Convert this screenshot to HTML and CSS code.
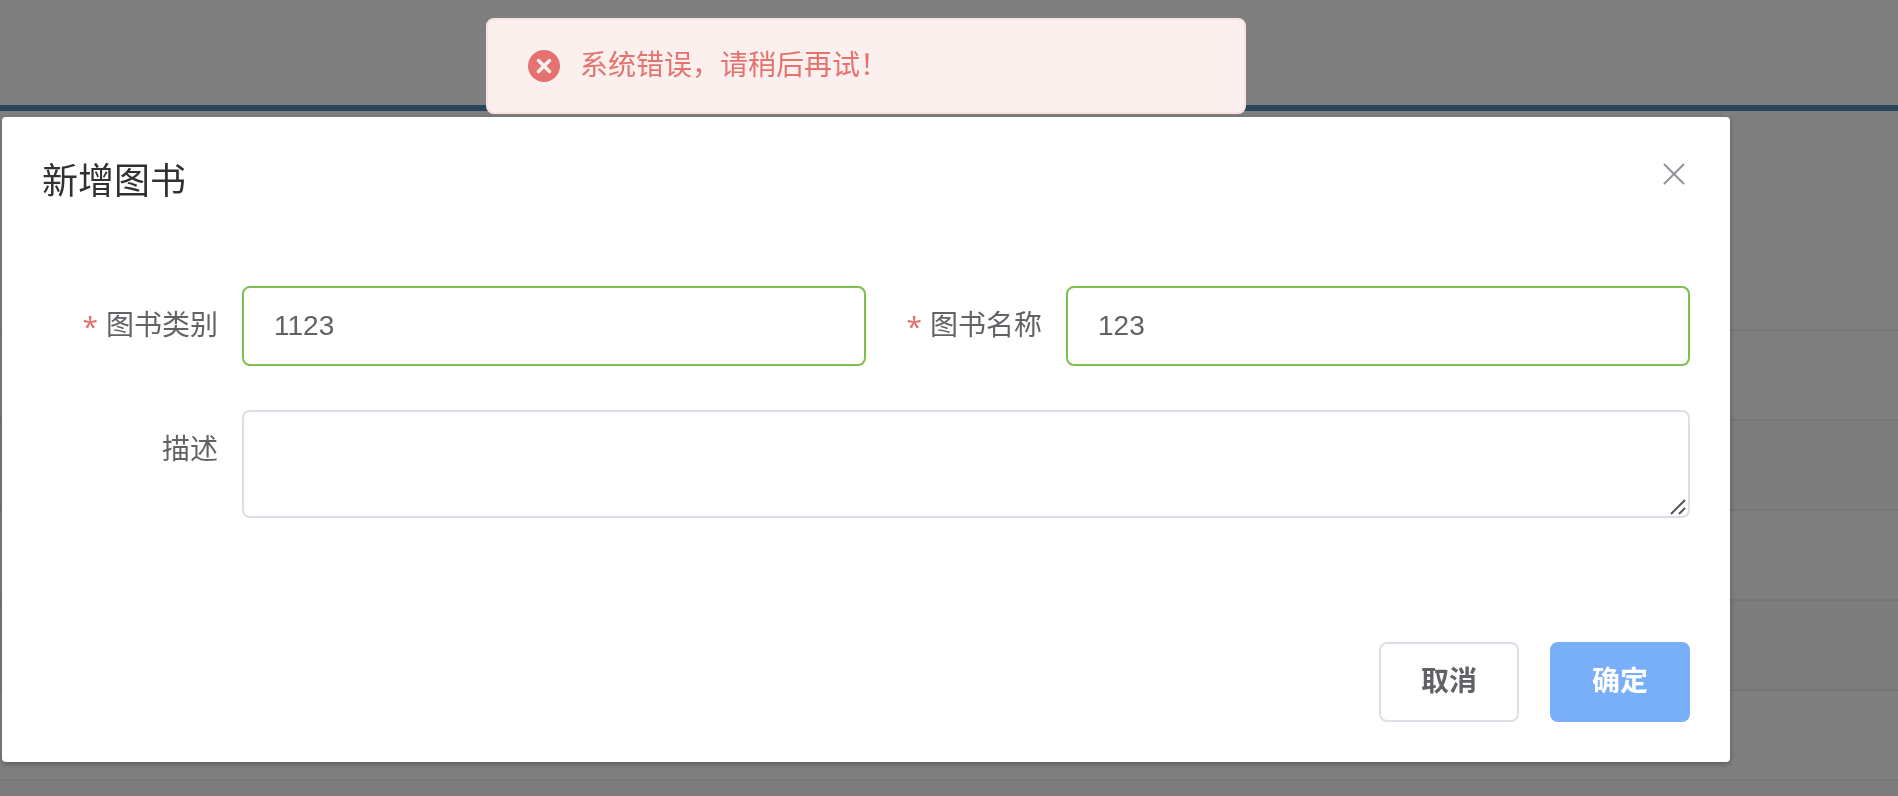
FILE: index.html
```
<!DOCTYPE html>
<html lang="zh-CN">
<head>
  <meta charset="UTF-8">
  <title>新增图书</title>
  <link rel="stylesheet" href="styles.css">
</head>
<body>
  <div class="page">
    <div class="page-header"></div>
    <div class="page-tools"></div>
    <div class="row"></div>
    <div class="row"></div>
    <div class="row"></div>
    <div class="row"></div>
    <div class="row"></div>
    <div class="row"></div>
  </div>

  <div class="mask">
    <div class="dialog" role="dialog" aria-labelledby="dialog-title">
      <div class="dialog-header">
        <h1 class="dialog-title" id="dialog-title">新增图书</h1>
        <button type="button" class="dialog-close" aria-label="关闭">
          <svg viewBox="0 0 32 32" width="32" height="32"><path d="M6 6L26 26M26 6L6 26" fill="none" stroke="currentColor" stroke-width="2"/></svg>
        </button>
      </div>

      <form id="book-form" class="form">
        <div class="form-row">
          <div class="form-item">
            <label class="required" for="category">图书类别</label>
            <input class="success" type="text" id="category" value="1123">
          </div>
          <div class="form-item">
            <label class="required" for="name">图书名称</label>
            <input class="success" type="text" id="name" value="123">
          </div>
        </div>
        <div class="form-item">
          <label for="desc">描述</label>
          <div class="textarea-wrap">
            <textarea id="desc" rows="2"></textarea>
            <svg class="grip" viewBox="0 0 16 16" width="16" height="16"><path d="M1 15L15 1M9 15L15 9" fill="none" stroke="currentColor" stroke-width="2"/></svg>
          </div>
        </div>
      </form>

      <div class="dialog-footer">
        <button type="button" class="btn">取消</button>
        <button type="submit" form="book-form" class="btn btn-primary">确定</button>
      </div>
    </div>

    <div class="message" role="alert">
      <svg class="message-icon" viewBox="0 0 32 32" width="32" height="32"><circle cx="16" cy="16" r="16" fill="currentColor"/><path d="M10.500 10.500L21.500 21.500M21.500 10.500L10.500 21.500" fill="none" stroke="#fcf0ef" stroke-width="3.500" stroke-linecap="round"/></svg>
      <p>系统错误，请稍后再试！</p>
    </div>
  </div>
</body>
</html>
```
FILE: styles.css
```
* {
  box-sizing: border-box;
}
body {
  margin: 0;
  font-family: "Liberation Sans", "Noto Sans CJK SC", sans-serif;
  font-size: 28px;
  color: #606266;
  background: #fff;
}
.page {
  display: flex;
  flex-direction: column;
  height: 100vh;
  overflow: hidden;
}
.page-header {
  flex: none;
  height: 111px;
  border-bottom: 6px solid #548cb8;
}
.page-tools {
  flex: none;
  height: 220px;
  border-bottom: 2px solid #ebeef5;
}
.row {
  flex: none;
  height: 90px;
  border-bottom: 2px solid #ebeef5;
}
.row:nth-child(even) {
  background: #fafafa;
}
.row:last-child {
  flex: 0 1 90px;
  border-bottom: none;
}

/* dialog */
.mask {
  position: fixed;
  inset: 0;
  padding: 117px 168px 34px 2px;
  background: rgba(0, 0, 0, 0.5);
}
.dialog {
  background: #fff;
  border-radius: 4px;
  box-shadow: 0 2px 6px rgba(0, 0, 0, 0.3);
}
.dialog-header {
  display: flex;
  justify-content: space-between;
  align-items: flex-start;
  padding: 40px 40px 20px;
}
.dialog-title {
  margin: 0;
  font-size: 36px;
  font-weight: normal;
  line-height: 49px;
  color: #303133;
}
.dialog-close {
  display: flex;
  align-items: center;
  height: 34px;
  padding: 0;
  border: none;
  background: none;
  color: #909399;
  cursor: pointer;
}
.form {
  padding: 60px 40px;
}
.form-row {
  display: grid;
  grid-template-columns: 1fr 1fr;
}
.form-item {
  display: flex;
  margin-bottom: 44px;
}
.form-item:last-child {
  margin-bottom: 44px;
}
label {
  display: flex;
  justify-content: flex-end;
  flex: none;
  width: 200px;
  height: 80px;
  padding-right: 24px;
  line-height: 80px;
}
label.required::before {
  content: "*";
  margin-right: 8px;
  color: #e4736f;
  font-family: "Noto Sans", sans-serif;
}
input, textarea {
  display: block;
  width: 100%;
  min-width: 0;
  border: 2px solid #dcdfe6;
  border-radius: 8px;
  outline: none;
  background: #fff;
  color: #606266;
  font-family: inherit;
  font-size: 28px;
}
input {
  height: 80px;
  padding: 0 30px;
}
input.success {
  border-color: #7cc04f;
}
.textarea-wrap {
  position: relative;
  flex: 1;
}
textarea {
  height: 108px;
  padding: 10px 30px;
  line-height: 42px;
  resize: vertical;
}
textarea::-webkit-resizer {
  display: none;
}
.grip {
  position: absolute;
  right: 4px;
  bottom: 3px;
  color: #555;
  pointer-events: none;
}
.dialog-footer {
  display: flex;
  justify-content: flex-end;
  gap: 31px;
  padding: 20px 40px 40px;
}
.btn {
  display: flex;
  align-items: center;
  height: 80px;
  padding: 0 40px;
  border: 2px solid #dcdfe6;
  border-radius: 8px;
  background: #fff;
  color: #606266;
  font-family: inherit;
  font-size: 28px;
  font-weight: bold;
  line-height: 28px;
  cursor: pointer;
}
.btn-primary {
  border-color: #79aef9;
  background: #79aef9;
  color: #fff;
}

/* message */
.message {
  position: absolute;
  top: 18px;
  left: 486px;
  width: 760px;
  display: flex;
  align-items: center;
  gap: 20px;
  height: 96px;
  padding: 0 40px;
  border: 2px solid #f8e3e2;
  border-radius: 8px;
  background: #fcf0ef;
  color: #e4736f;
}
.message p {
  margin: 0;
  line-height: 28px;
}
```
